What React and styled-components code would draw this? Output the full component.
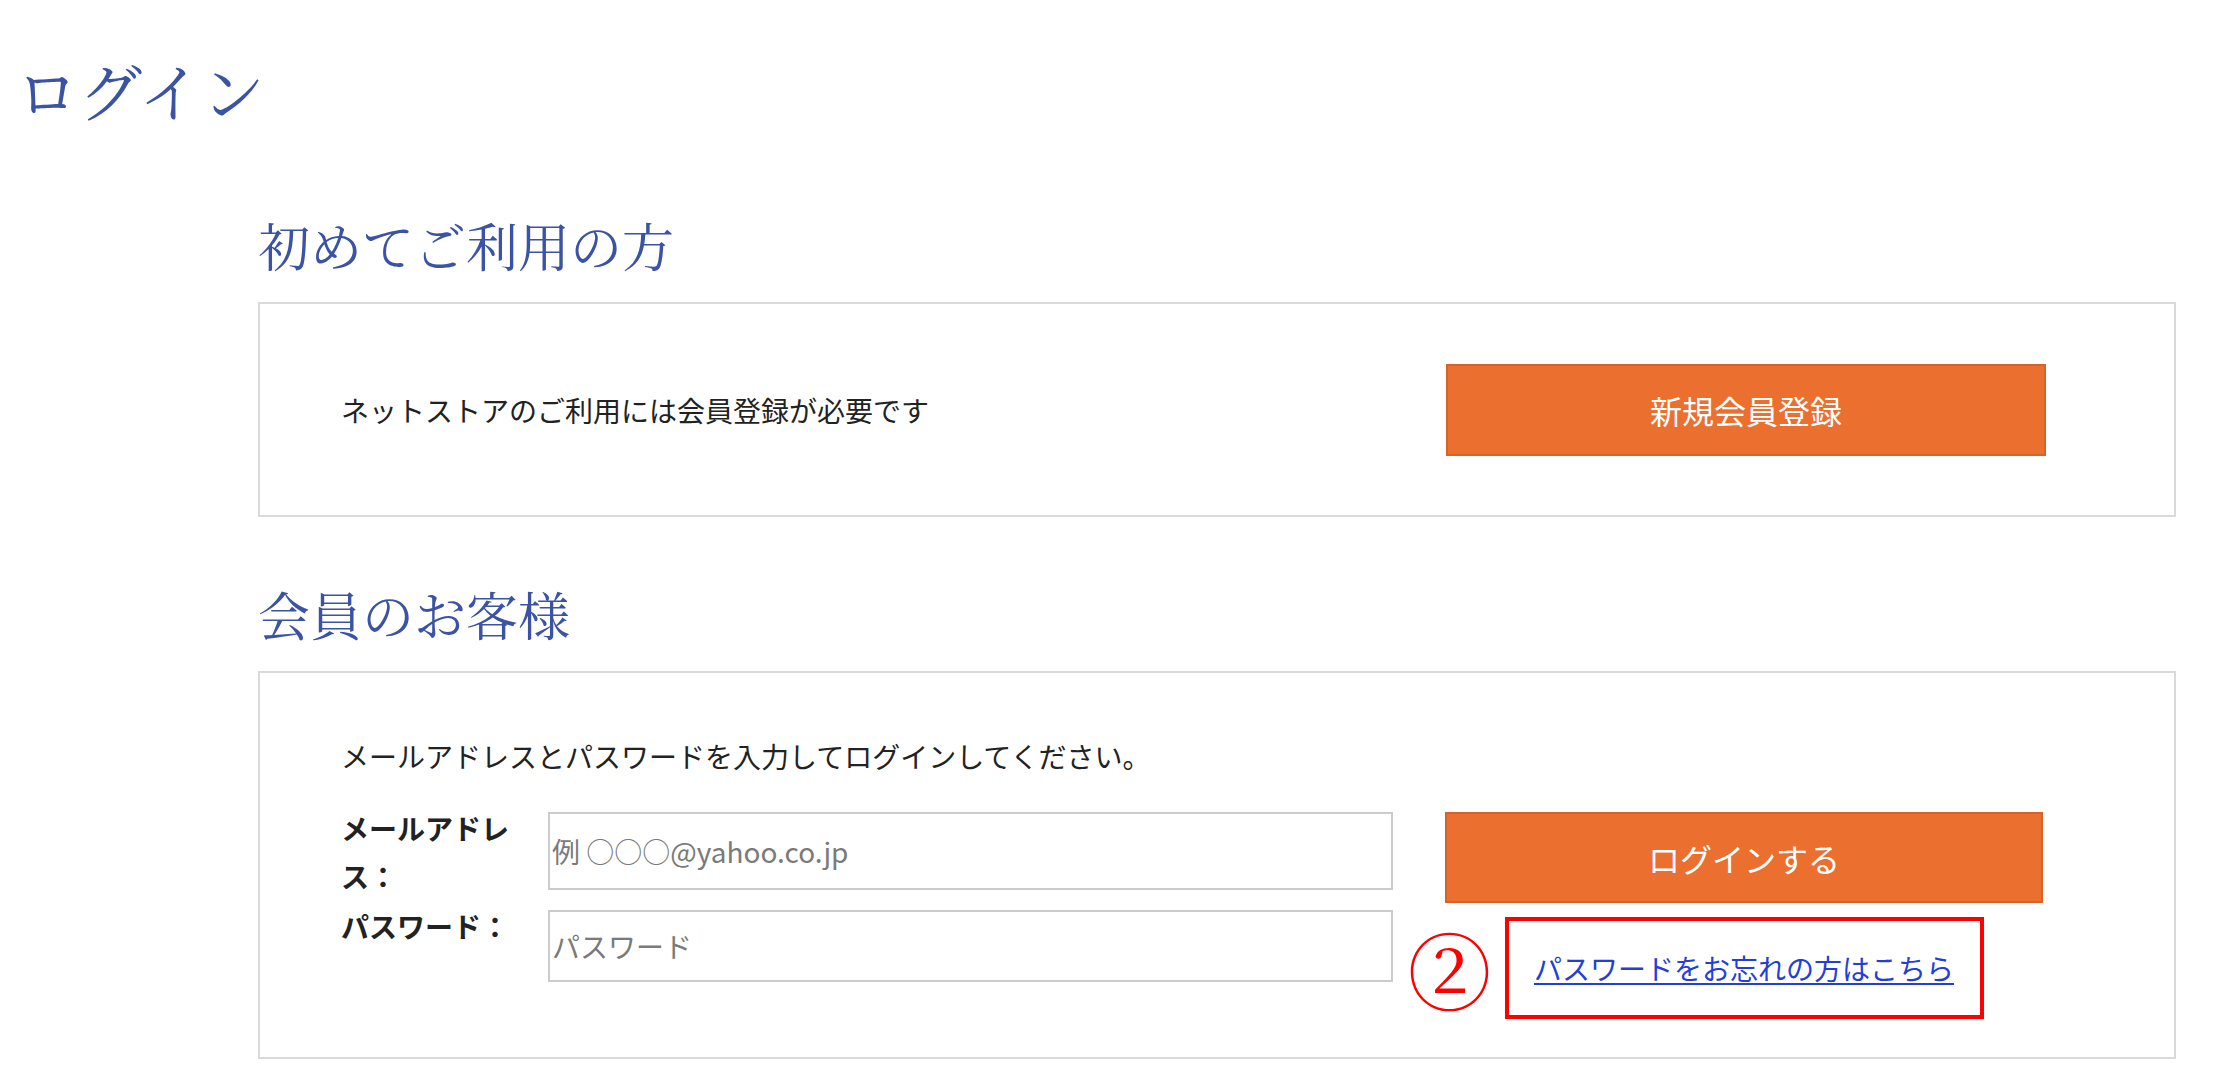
import React from "react";
import styled, { createGlobalStyle } from "styled-components";

const GlobalStyle = createGlobalStyle`
  html, body {
    margin: 0;
    padding: 0;
    background: #ffffff;
  }
  body {
    font-family: "Noto Sans CJK JP", "Noto Sans", sans-serif;
    color: #222222;
  }
  * { box-sizing: border-box; }
`;

const Page = styled.div`
  width: 2226px;
  min-height: 1088px;
  padding-top: 47px;
`;

const PageTitle = styled.h1`
  margin: 0;
  padding-left: 16px;
  font-family: "Noto Serif CJK JP", serif;
  font-weight: 400;
  font-size: 63px;
  line-height: 84px;
  color: #3b53a4;
`;

const Main = styled.main`
  margin: 79px 0 0 258px;
  width: 1918px;
  display: flex;
  flex-direction: column;
`;

const SectionTitle = styled.h2`
  margin: ${(p) => (p.$first ? "0" : "62px")} 0 22px 0;
  font-family: "Noto Serif CJK JP", serif;
  font-weight: 400;
  font-size: 52px;
  line-height: 70px;
  color: #3b53a4;
`;

const Card = styled.section`
  border: 2px solid #dadada;
  background: #fff;
`;

const RegisterRow = styled.div`
  height: 211px;
  padding: 0 128px 0 81px;
  display: flex;
  align-items: center;
  justify-content: space-between;
`;

const BodyText = styled.p`
  margin: 0;
  font-size: 28px;
  line-height: 48px;
  color: #222;
`;

const OrangeButton = styled.button`
  width: ${(p) => p.$w}px;
  height: ${(p) => p.$h}px;
  background: #eb6f2e;
  border: 2px solid #d6632a;
  border-radius: 0;
  color: #ffffff;
  font-family: "Noto Sans CJK JP", sans-serif;
  font-size: 32px;
  font-weight: 400;
  cursor: pointer;
  padding: 0;
`;

const MemberBody = styled.div`
  padding: 59px 131px 38px 81px;
  display: flex;
  flex-direction: column;
`;

const LoginRow = styled.div`
  margin-top: 24px;
  display: flex;
  align-items: flex-start;
  gap: 52px;
`;

const FormGrid = styled.div`
  display: grid;
  grid-template-columns: 180px 845px;
  column-gap: 27px;
  row-gap: 2px;
  align-items: start;
`;

const FieldLabel = styled.label`
  font-size: 28px;
  line-height: 48px;
  font-weight: 700;
  color: #222;
`;

const TextInput = styled.input`
  margin-top: 8px;
  width: 845px;
  height: ${(p) => p.$h}px;
  border: 2px solid #cccccc;
  border-radius: 0;
  padding: 0 2px;
  font-family: "Noto Sans CJK JP", sans-serif;
  font-size: 28px;
  color: #333;
  background: #fff;
  outline: none;
  &::placeholder {
    color: #7a7a7a;
  }
`;

const ActionColumn = styled.div`
  padding-top: 8px;
  display: flex;
  flex-direction: column;
  align-items: center;
`;

const AnnotatedBox = styled.div`
  position: relative;
  margin-top: 14px;
  width: 479px;
  height: 102px;
  border: 4px solid #ff0000;
  display: flex;
  align-items: center;
  justify-content: center;
`;

const Marker = styled.span`
  position: absolute;
  right: calc(100% + 17px);
  top: 50%;
  transform: translateY(-50%);
  font-family: "Noto Serif CJK JP", serif;
  font-size: 84px;
  line-height: 1;
  color: #ff0000;
`;

const ForgotLink = styled.a`
  font-size: 28px;
  line-height: 40px;
  color: #2240d8;
  text-decoration: underline;
  text-underline-offset: 3px;
  cursor: pointer;
`;

export default function App() {
  return (
    <>
      <GlobalStyle />
      <Page>
        <PageTitle>ログイン</PageTitle>
        <Main>
          <SectionTitle $first>初めてご利用の方</SectionTitle>
          <Card>
            <RegisterRow>
              <BodyText>ネットストアのご利用には会員登録が必要です</BodyText>
              <OrangeButton $w={600} $h={92}>新規会員登録</OrangeButton>
            </RegisterRow>
          </Card>

          <SectionTitle>会員のお客様</SectionTitle>
          <Card>
            <MemberBody>
              <BodyText>メールアドレスとパスワードを入力してログインしてください。</BodyText>
              <LoginRow>
                <FormGrid>
                  <FieldLabel htmlFor="email">メールアドレス：</FieldLabel>
                  <TextInput id="email" $h={78} placeholder="例 ○○○@yahoo.co.jp" />
                  <FieldLabel htmlFor="password">パスワード：</FieldLabel>
                  <TextInput id="password" type="password" $h={72} placeholder="パスワード" />
                </FormGrid>
                <ActionColumn>
                  <OrangeButton $w={598} $h={91}>ログインする</OrangeButton>
                  <AnnotatedBox>
                    <Marker>②</Marker>
                    <ForgotLink>パスワードをお忘れの方はこちら</ForgotLink>
                  </AnnotatedBox>
                </ActionColumn>
              </LoginRow>
            </MemberBody>
          </Card>
        </Main>
      </Page>
    </>
  );
}
